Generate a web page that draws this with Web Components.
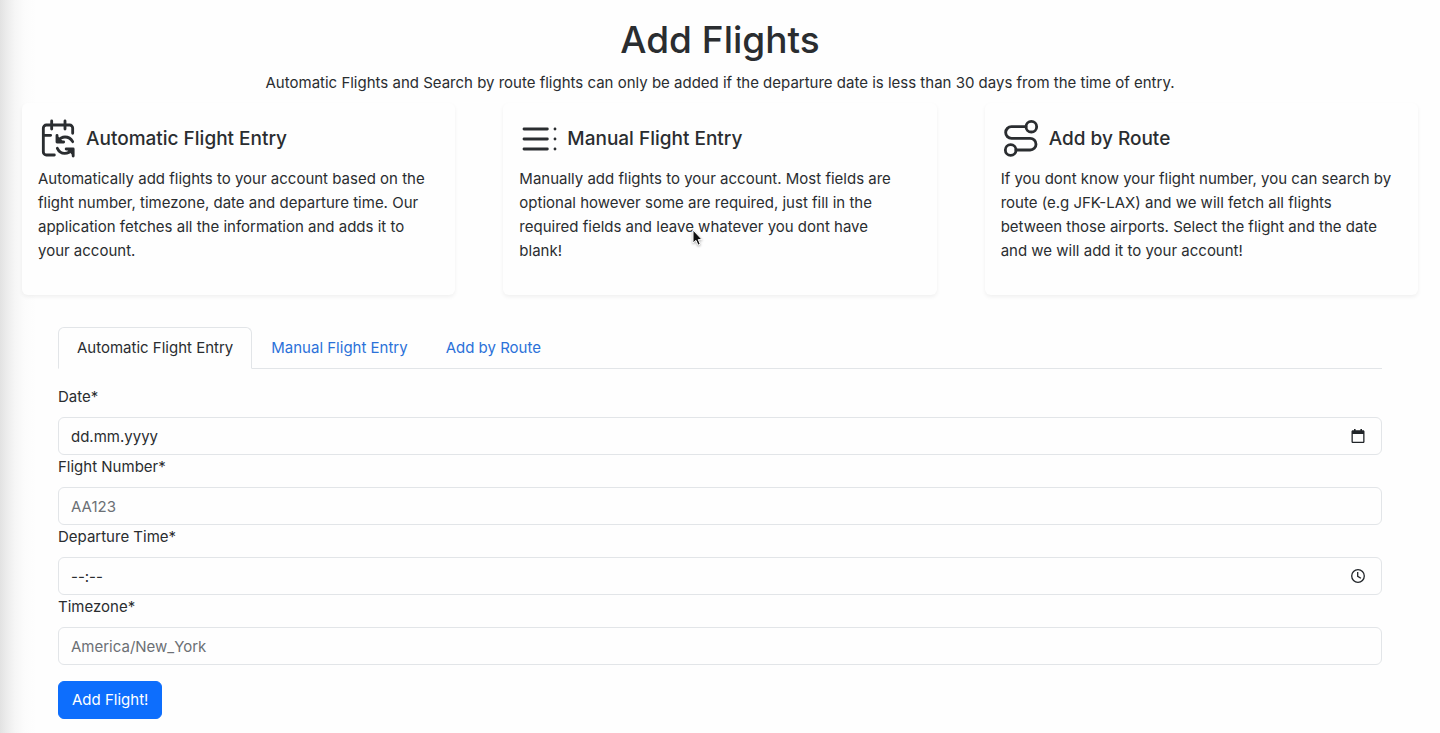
<!DOCTYPE html>
<html lang="en">
<head>
<meta charset="utf-8">
<meta name="viewport" content="width=device-width, initial-scale=1">
<title>Add Flights</title>
<style>
    body {
        margin: 0;
        background: #fefefe;
        color: #2a2d30;
        font: 400 15px/24px Inter, "Liberation Sans", sans-serif;
    }
</style>
</head>
<body>
<add-flights-page>
    <info-card slot="cards" heading="Automatic Flight Entry" icon="sync">Automatically add flights to your account based on the flight number, timezone, date and departure time. Our application fetches all the information and adds it to your account.</info-card>
    <info-card slot="cards" heading="Manual Flight Entry" icon="list">Manually add flights to your account. Most fields are optional however some are required, just fill in the required fields and leave whatever you dont have blank!</info-card>
    <info-card slot="cards" heading="Add by Route" icon="route">If you dont know your flight number, you can search by route (e.g JFK-LAX) and we will fetch all flights between those airports. Select the flight and the date and we will add it to your account!</info-card>
    <tab-bar tabs="Automatic Flight Entry,Manual Flight Entry,Add by Route"></tab-bar>
    <flight-form></flight-form>
</add-flights-page>
<mouse-pointer></mouse-pointer>

<script>
const ICONS = {
    sync: `<path d="M8.2 1.2V6M16.2 1.2V6M3.2 9.8H7.6M9.8 21.6H5a1.8 1.8 0 0 1-1.8-1.8V5.4A1.8 1.8 0 0 1 5 3.6h14a1.8 1.8 0 0 1 1.8 1.8v3.2"/>
        <path d="M20.8 13.6c-1-1.8-2.6-2.8-4.6-2.8-1.6 0-3 .7-4.2 2.4M11.4 9.8v4h4M11.6 17.6c.9 1.9 2.5 3 4.4 3 1.8 0 3.4-.9 4.4-2.2M21.1 22.2V18h-4.2"/>
        <path d="M11.4 10.6v3.2h3.4zM21.1 21.4V18h-3.4z" fill="currentColor" stroke-width="1"/>`,
    list: `<path d="M3 6h14M3 12h14M3 18h14M21.6 6v.01M21.6 12v.01M21.6 18v.01"/>`,
    route: `<circle cx="18.2" cy="4.6" r="3.2"/><circle cx="5.8" cy="18.6" r="3.2"/>
        <path d="M15 4.6H6.3a3.5 3.5 0 0 0 0 7h11.2a3.5 3.5 0 0 1 0 7H9"/>`
};

// Page shell: heading, a row of info cards, then tabs and form
class AddFlightsPage extends HTMLElement {
    constructor() {
        super();
        this.attachShadow({ mode: 'open' }).innerHTML = `
            <style>
                :host {
                    display: block;
                    box-sizing: border-box;
                    min-height: 100vh;
                    padding: 16px 22px 12px;
                    background: linear-gradient(90deg, #e2e2e2, #ebebeb 6px, #f6f6f6 15px, #fcfcfc 25px, #fefefe 36px);
                }
                header { text-align: center; }
                h1 { margin: 0 0 8px; font-size: 37px; line-height: 47px; font-weight: 500; }
                p { margin: 0 0 8px; }
                .cards { display: grid; grid-template-columns: repeat(3, 1fr); gap: 48px; }
                main { padding: 32px 36px 0; }
            </style>
            <header>
                <h1>Add Flights</h1>
                <p>Automatic Flights and Search by route flights can only be added if the departure date is less than 30 days from the time of entry.</p>
            </header>
            <section class="cards"><slot name="cards"></slot></section>
            <main><slot></slot></main>
        `;
    }
}

class InfoCard extends HTMLElement {
    constructor() {
        super();
        this.attachShadow({ mode: 'open' });
    }

    connectedCallback() {
        this.shadowRoot.innerHTML = `
            <style>
                :host {
                    display: block;
                    padding: 16px;
                    border-radius: 6px;
                    background: #fefefe;
                    box-shadow: 0 2px 4px rgba(0, 0, 0, 0.06);
                }
                .title { display: flex; align-items: center; gap: 8px; margin-bottom: 8px; }
                svg {
                    flex: none;
                    fill: none;
                    stroke: currentColor;
                    stroke-width: 1.7;
                    stroke-linecap: round;
                    stroke-linejoin: round;
                }
                h2 { margin: 0; font-size: 19px; line-height: 24px; font-weight: 500; }
                p { margin: 0 0 16px; padding-right: 10px; }
            </style>
            <div class="title">
                <svg width="40" height="40" viewBox="0 0 24 24" aria-hidden="true">${ICONS[this.getAttribute('icon')]}</svg>
                <h2>${this.getAttribute('heading')}</h2>
            </div>
            <p><slot></slot></p>
        `;
    }
}

class TabBar extends HTMLElement {
    constructor() {
        super();
        this.attachShadow({ mode: 'open' });
    }

    connectedCallback() {
        const tabs = this.getAttribute('tabs').split(',');
        this.shadowRoot.innerHTML = `
            <style>
                :host { display: block; margin-bottom: 16px; }
                nav { display: flex; border-bottom: 1px solid #e2e5e8; }
                button {
                    margin: 0 0 -1px;
                    padding: 8px 18px;
                    border: 1px solid transparent;
                    border-radius: 6px 6px 0 0;
                    background: none;
                    color: #2b71d9;
                    font: inherit;
                    cursor: pointer;
                }
                button[aria-selected="true"] {
                    border-color: #e2e5e8 #e2e5e8 #fefefe;
                    background: #fefefe;
                    color: #2a2d30;
                }
            </style>
            <nav role="tablist">
                ${tabs.map((t, i) => `<button type="button" role="tab" aria-selected="${i === 0}">${t}</button>`).join('')}
            </nav>
        `;

        const buttons = this.shadowRoot.querySelectorAll('button');
        buttons.forEach((button) => {
            button.addEventListener('click', () => {
                buttons.forEach((b) => b.setAttribute('aria-selected', b === button));
            });
        });
    }
}

// Labelled text box with an optional picker button on the right
class FormField extends HTMLElement {
    constructor() {
        super();
        this.attachShadow({ mode: 'open' });
    }

    connectedCallback() {
        const picker = this.getAttribute('picker');
        const glyphs = {
            date: `<svg width="14" height="15" viewBox="0 0 14 15"><path d="M3 0h1.6v1.3h4.8V0H11v1.3h1.2c.7 0 1.3.6 1.3 1.3v10.1c0 .7-.6 1.3-1.3 1.3H1.8c-.7 0-1.3-.6-1.3-1.3V2.6c0-.7.6-1.3 1.3-1.3H3zM1.8 5v7.7h10.4V5z" fill="currentColor" fill-rule="evenodd"/></svg>`,
            time: `<svg width="16" height="16" viewBox="0 0 16 16" fill="none" stroke="currentColor" stroke-width="1.3"><circle cx="8" cy="8" r="6.3"/><path d="M7.7 4v4.3l3.2 2"/></svg>`
        };
        this.shadowRoot.innerHTML = `
            <style>
                :host { display: block; }
                label { display: block; margin-bottom: 8px; }
                .box {
                    display: flex;
                    align-items: center;
                    border: 1px solid #e2e5e8;
                    border-radius: 6px;
                    background: #fefefe;
                }
                .box:focus-within { border-color: #86b7fe; }
                input {
                    flex: 1;
                    min-width: 0;
                    box-sizing: border-box;
                    height: 36px;
                    padding: 6px 12px;
                    border: 0;
                    outline: 0;
                    background: none;
                    color: inherit;
                    font: inherit;
                }
                input::placeholder { color: #6c7075; opacity: 1; }
                .picker input::placeholder { color: #2a2d30; }
                button {
                    display: flex;
                    justify-content: center;
                    width: 24px;
                    margin-right: 11px;
                    padding: 0;
                    border: 0;
                    background: none;
                    color: #212529;
                }
            </style>
            <label for="field">${this.getAttribute('label')}</label>
            <div class="box ${picker ? 'picker' : ''}">
                <input id="field" type="text" placeholder="${this.getAttribute('placeholder')}">
                ${picker ? `<button type="button" aria-label="Pick ${picker}">${glyphs[picker]}</button>` : ''}
            </div>
        `;
    }
}

class FlightForm extends HTMLElement {
    constructor() {
        super();
        this.attachShadow({ mode: 'open' }).innerHTML = `
            <style>
                :host { display: block; }
                button {
                    display: block;
                    margin-top: 16px;
                    padding: 6px 13px;
                    border: 1px solid #0d6efd;
                    border-radius: 6px;
                    background: #0d6efd;
                    color: #fff;
                    font: inherit;
                    cursor: pointer;
                }
            </style>
            <form>
                <form-field label="Date*" placeholder="dd.mm.yyyy" picker="date"></form-field>
                <form-field label="Flight Number*" placeholder="AA123"></form-field>
                <form-field label="Departure Time*" placeholder="--:--" picker="time"></form-field>
                <form-field label="Timezone*" placeholder="America/New_York"></form-field>
                <button type="submit">Add Flight!</button>
            </form>
        `;
        this.shadowRoot.querySelector('form').addEventListener('submit', (e) => e.preventDefault());
    }
}

// Arrow pointer floating over the page
class MousePointer extends HTMLElement {
    constructor() {
        super();
        this.attachShadow({ mode: 'open' }).innerHTML = `
            <style>
                :host { position: absolute; left: 692px; top: 229px; pointer-events: none; }
                svg { display: block; filter: drop-shadow(0 1px 1px rgba(0, 0, 0, 0.3)); }
            </style>
            <svg width="12" height="18" viewBox="0 0 12 18" aria-hidden="true">
                <path d="M1 1v13l3-2.6 2 4.8 2.3-1-2-4.6H10z" fill="#111" stroke="#fff" stroke-width="1"/>
            </svg>
        `;
    }
}

customElements.define('add-flights-page', AddFlightsPage);
customElements.define('info-card', InfoCard);
customElements.define('tab-bar', TabBar);
customElements.define('form-field', FormField);
customElements.define('flight-form', FlightForm);
customElements.define('mouse-pointer', MousePointer);
</script>
</body>
</html>
